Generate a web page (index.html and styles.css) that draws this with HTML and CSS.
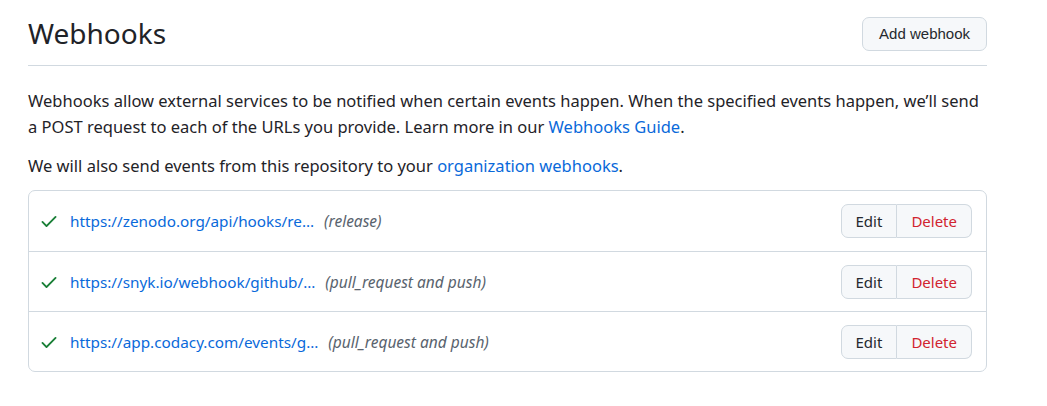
FILE: index.html
```html
<!DOCTYPE html>
<html>
<head>
<meta charset="utf-8">
<link rel="stylesheet" href="styles.css">
</head>
<body>
<div class="page">
  <div class="subhead">
    <h2 class="subhead-title">Webhooks</h2>
    <button class="btn btn-add">Add webhook</button>
  </div>
  <p class="intro">Webhooks allow external services to be notified when certain events happen. When the specified events happen, we’ll send a POST request to each of the URLs you provide. Learn more in our <a href="#">Webhooks Guide</a>.</p>
  <p class="intro">We will also send events from this repository to your <a href="#">organization webhooks</a>.</p>
  <div class="box">
    <div class="row">
      <svg class="check" viewBox="0 0 16 16" width="20" height="20"><path d="M13.78 4.22a.75.75 0 0 1 0 1.06l-7.25 7.250a.75.75 0 0 1-1.06 0L2.22 9.28a.751.751 0 0 1 .018-1.042.751.751 0 0 1 1.042-.018L6 10.94l6.72-6.720a.75.75 0 0 1 1.060 0Z"/></svg>
      <a class="url" href="#">https://zenodo.org/api/hooks/re…</a>
      <em class="events">(release)</em>
      <div class="btn-group"><button class="btn btn-edit">Edit</button><button class="btn btn-delete">Delete</button></div>
    </div>
    <div class="row">
      <svg class="check" viewBox="0 0 16 16" width="20" height="20"><path d="M13.78 4.22a.75.75 0 0 1 0 1.06l-7.25 7.250a.75.75 0 0 1-1.06 0L2.22 9.28a.751.751 0 0 1 .018-1.042.751.751 0 0 1 1.042-.018L6 10.94l6.72-6.720a.75.75 0 0 1 1.060 0Z"/></svg>
      <a class="url" href="#">https://snyk.io/webhook/github/…</a>
      <em class="events">(pull_request and push)</em>
      <div class="btn-group"><button class="btn btn-edit">Edit</button><button class="btn btn-delete">Delete</button></div>
    </div>
    <div class="row">
      <svg class="check" viewBox="0 0 16 16" width="20" height="20"><path d="M13.78 4.22a.75.75 0 0 1 0 1.06l-7.25 7.250a.75.75 0 0 1-1.06 0L2.22 9.28a.751.751 0 0 1 .018-1.042.751.751 0 0 1 1.042-.018L6 10.94l6.72-6.720a.75.75 0 0 1 1.060 0Z"/></svg>
      <a class="url" href="#">https://app.codacy.com/events/g…</a>
      <em class="events">(pull_request and push)</em>
      <div class="btn-group"><button class="btn btn-edit">Edit</button><button class="btn btn-delete">Delete</button></div>
    </div>
  </div>
</div>
</body>
</html>
```
FILE: styles.css
```css
* { box-sizing: border-box; }
body {
  margin: 0;
  background: #ffffff;
  color: #1f2328;
  font-family: "Noto Sans", sans-serif;
}
.page {
  width: 959px;
  margin-left: 28px;
  padding-top: 16px;
}
.subhead {
  display: flex;
  align-items: center;
  justify-content: space-between;
  padding-bottom: 14px;
  border-bottom: 1px solid #d1d9e0;
}
.subhead-title {
  margin: 0;
  font-size: 28px;
  font-weight: 400;
  line-height: 35px;
}
.btn {
  font-family: "Liberation Sans", Arial, sans-serif;
  font-size: 15px;
  color: #25292e;
  background: #f6f8fa;
  border: 1px solid #d1d9e0;
  border-radius: 7px;
  height: 34px;
  padding: 0 16px;
}
.intro {
  margin: 0;
  font-size: 16.5px;
  line-height: 26px;
}
.subhead + .intro { margin-top: 22px; }
.intro + .intro { margin-top: 13px; }
a { color: #0969da; text-decoration: none; }
.box {
  margin-top: 11px;
  border: 1px solid #d1d9e0;
  border-radius: 7px;
}
.row {
  display: flex;
  align-items: center;
  height: 60px;
  padding: 0 14px 0 10px;
  border-top: 1px solid #d1d9e0;
}
.row:first-child { border-top: 0; }
.check { fill: #1a7f37; margin-right: 11px; flex: none; }
.url { font-size: 15.3px; }
.events {
  font-size: 15.5px;
  color: #59636e;
  margin-left: 10px;
}
.btn-group { margin-left: auto; display: flex; }
.btn-group .btn {
  font-family: "Noto Sans", sans-serif;
  font-size: 15px;
  padding: 0 14px;
}
.btn-edit { border-radius: 7px 0 0 7px; }
.btn-delete { border-radius: 0 7px 7px 0; border-left: 0; color: #d1242f; }
```
